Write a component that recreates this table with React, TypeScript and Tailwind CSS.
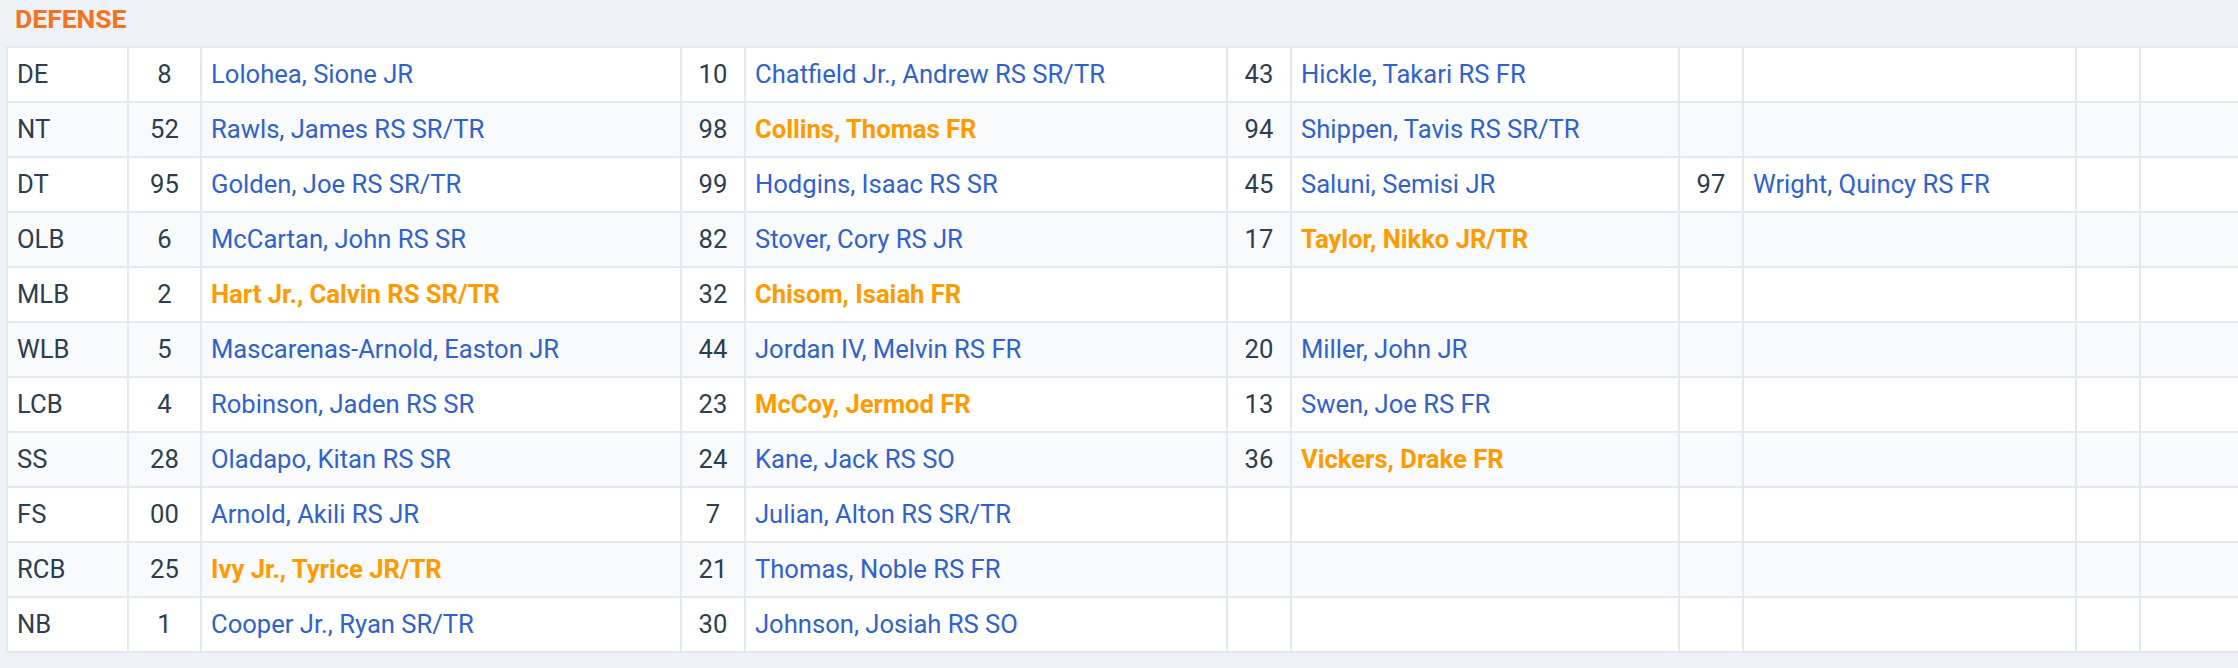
type Player = { num: string; name: string; hot?: boolean };
type DepthRow = { pos: string; players: (Player | null)[] };

const ROWS: DepthRow[] = [
  {
    pos: "DE",
    players: [
      { num: "8", name: "Lolohea, Sione JR" },
      { num: "10", name: "Chatfield Jr., Andrew RS SR/TR" },
      { num: "43", name: "Hickle, Takari RS FR" },
    ],
  },
  {
    pos: "NT",
    players: [
      { num: "52", name: "Rawls, James RS SR/TR" },
      { num: "98", name: "Collins, Thomas FR", hot: true },
      { num: "94", name: "Shippen, Tavis RS SR/TR" },
    ],
  },
  {
    pos: "DT",
    players: [
      { num: "95", name: "Golden, Joe RS SR/TR" },
      { num: "99", name: "Hodgins, Isaac RS SR" },
      { num: "45", name: "Saluni, Semisi JR" },
      { num: "97", name: "Wright, Quincy RS FR" },
    ],
  },
  {
    pos: "OLB",
    players: [
      { num: "6", name: "McCartan, John RS SR" },
      { num: "82", name: "Stover, Cory RS JR" },
      { num: "17", name: "Taylor, Nikko JR/TR", hot: true },
    ],
  },
  {
    pos: "MLB",
    players: [
      { num: "2", name: "Hart Jr., Calvin RS SR/TR", hot: true },
      { num: "32", name: "Chisom, Isaiah FR", hot: true },
    ],
  },
  {
    pos: "WLB",
    players: [
      { num: "5", name: "Mascarenas-Arnold, Easton JR" },
      { num: "44", name: "Jordan IV, Melvin RS FR" },
      { num: "20", name: "Miller, John JR" },
    ],
  },
  {
    pos: "LCB",
    players: [
      { num: "4", name: "Robinson, Jaden RS SR" },
      { num: "23", name: "McCoy, Jermod FR", hot: true },
      { num: "13", name: "Swen, Joe RS FR" },
    ],
  },
  {
    pos: "SS",
    players: [
      { num: "28", name: "Oladapo, Kitan RS SR" },
      { num: "24", name: "Kane, Jack RS SO" },
      { num: "36", name: "Vickers, Drake FR", hot: true },
    ],
  },
  {
    pos: "FS",
    players: [
      { num: "00", name: "Arnold, Akili RS JR" },
      { num: "7", name: "Julian, Alton RS SR/TR" },
    ],
  },
  {
    pos: "RCB",
    players: [
      { num: "25", name: "Ivy Jr., Tyrice JR/TR", hot: true },
      { num: "21", name: "Thomas, Noble RS FR" },
    ],
  },
  {
    pos: "NB",
    players: [
      { num: "1", name: "Cooper Jr., Ryan SR/TR" },
      { num: "30", name: "Johnson, Josiah RS SO" },
    ],
  },
];

const DEPTH = 5;

function PlayerCells({ p }: { p: Player | null }) {
  return (
    <>
      <td className="h-[53px] p-0 text-center align-middle">{p?.num ?? ""}</td>
      <td className="h-[53px] px-[9px] py-0 align-middle whitespace-nowrap">
        {p && (
          <a className={p.hot ? "font-bold text-[#ff9a00]" : "text-[#2f62cf]"}>
            {p.name}
          </a>
        )}
      </td>
    </>
  );
}

export default function App() {
  return (
    <div
      className="h-[668px] w-full overflow-hidden bg-[#eef1f5] text-[25.6px] text-[#2c3e50]"
      style={{ fontFamily: "Roboto, 'Liberation Sans', sans-serif" }}
    >
      <div className="h-[46px] pl-[15px] pt-[6px] leading-none">
        <span className="text-[26.5px] font-bold text-[#f47321]">DEFENSE</span>
      </div>

      <div className="pl-[6px]">
        <table className="w-[2257px] table-fixed border-separate border-spacing-[2px] bg-[#e4e9ef] leading-none">
          <colgroup>
            <col className="w-[119px]" />
            <col className="w-[71px]" />
            <col className="w-[478px]" />
            <col className="w-[62px]" />
            <col className="w-[480px]" />
            <col className="w-[62px]" />
            <col className="w-[386px]" />
            <col className="w-[62px]" />
            <col className="w-[331px]" />
            <col className="w-[62px]" />
            <col className="w-[120px]" />
          </colgroup>
          <tbody>
            {ROWS.map((row, i) => (
              <tr key={row.pos} className={i % 2 === 0 ? "bg-white" : "bg-[#f8fafc]"}>
                <td className="h-[53px] px-[9px] py-0 align-middle">{row.pos}</td>
                {Array.from({ length: DEPTH }).map((_, j) => (
                  <PlayerCells key={j} p={row.players[j] ?? null} />
                ))}
              </tr>
            ))}
          </tbody>
        </table>
      </div>
    </div>
  );
}
